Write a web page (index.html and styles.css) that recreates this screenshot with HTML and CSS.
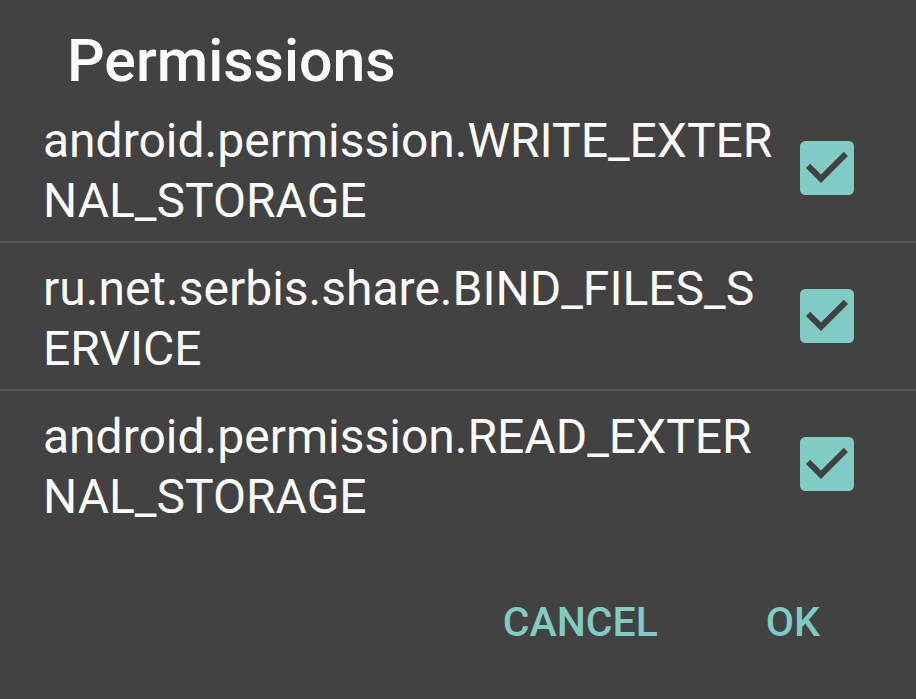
FILE: index.html
```
<!DOCTYPE html>
<html>
<head>
<meta charset="utf-8">
<link rel="stylesheet" href="styles.css">
</head>
<body>
<div class="dialog">
  <div class="title">Permissions</div>
  <div class="list">
    <div class="row">
      <div class="label">android.permission.WRITE_EXTERNAL_STORAGE</div>
      <svg class="box" viewBox="3 3 18 18"><rect x="3" y="3" width="18" height="18" rx="1.8" fill="#80cbc4"/><path d="M10 17l-5-5 1.41-1.41L10 14.17l7.59-7.59L19 8l-9 9z" fill="#424242"/></svg>
    </div>
    <div class="row">
      <div class="label">ru.net.serbis.share.BIND_FILES_SERVICE</div>
      <svg class="box" viewBox="3 3 18 18"><rect x="3" y="3" width="18" height="18" rx="1.8" fill="#80cbc4"/><path d="M10 17l-5-5 1.41-1.41L10 14.17l7.59-7.59L19 8l-9 9z" fill="#424242"/></svg>
    </div>
    <div class="row last">
      <div class="label">android.permission.READ_EXTERNAL_STORAGE</div>
      <svg class="box" viewBox="3 3 18 18"><rect x="3" y="3" width="18" height="18" rx="1.8" fill="#80cbc4"/><path d="M10 17l-5-5 1.41-1.41L10 14.17l7.59-7.59L19 8l-9 9z" fill="#424242"/></svg>
    </div>
  </div>
  <div class="actions">
    <span class="btn">CANCEL</span>
    <span class="btn">OK</span>
  </div>
</div>
</body>
</html>
```
FILE: styles.css
```
html, body {
  margin: 0;
  padding: 0;
  background: #424242;
}
.dialog {
  width: 916px;
  height: 699px;
  font-family: Roboto, "Liberation Sans", sans-serif;
  color: #fafafa;
}
.title {
  padding: 26px 0 0 67px;
  height: 69px;
  font-size: 59px;
  font-weight: 500;
  line-height: 70px;
}
.row {
  display: flex;
  align-items: center;
  height: 146px;
  border-bottom: 2px solid #565656;
}
.row.last {
  border-bottom: none;
}
.label {
  width: 735px;
  margin-left: 43px;
  padding: 6px 0 0 0;
  font-size: 48px;
  line-height: 60px;
  word-break: break-all;
}
.box {
  width: 54px;
  height: 54px;
  margin-left: 22px;
  flex: none;
}
.actions {
  display: flex;
  justify-content: flex-end;
  gap: 108px;
  padding-right: 96px;
  margin-top: 60px;
}
.btn {
  font-size: 41px;
  font-weight: 500;
  line-height: 50px;
  color: #80cbc4;
}
```
